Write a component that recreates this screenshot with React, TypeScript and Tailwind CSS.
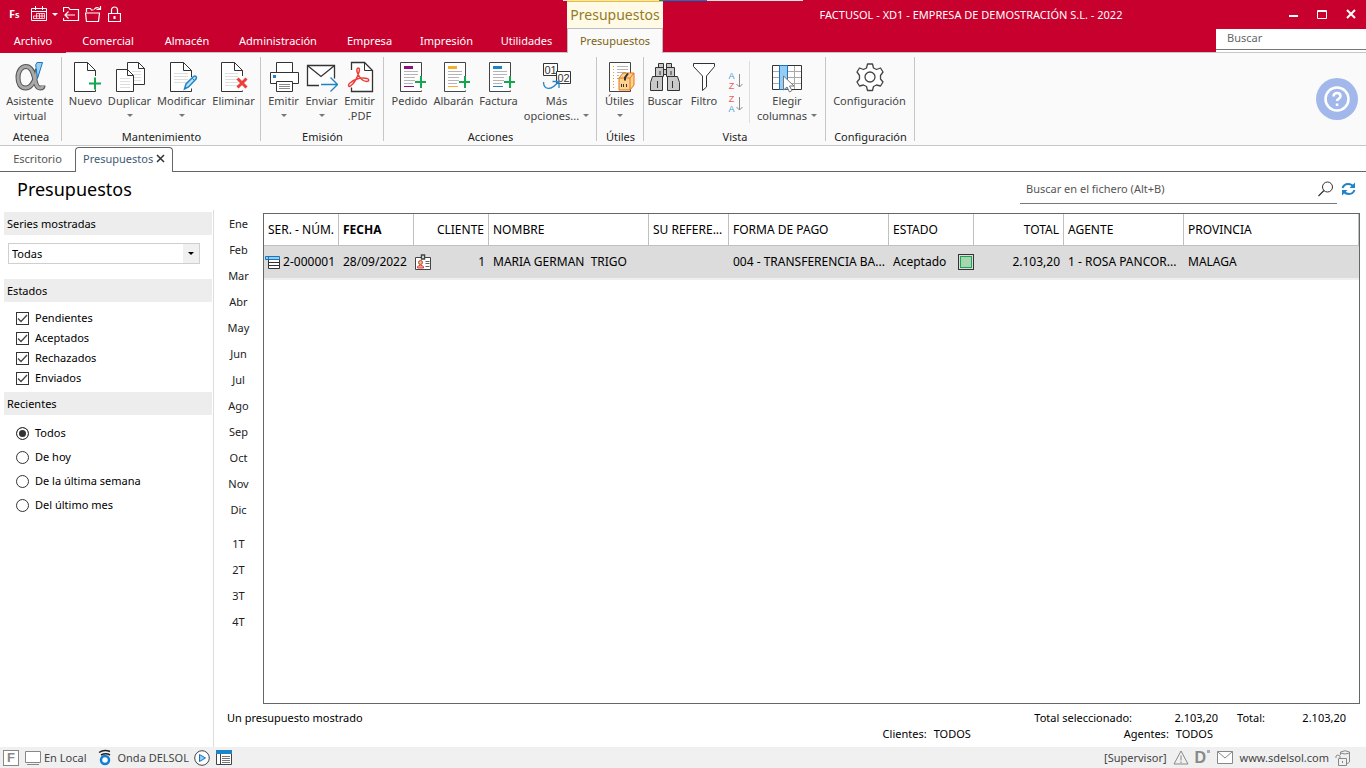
import { useState } from 'react';
import type { ReactNode } from 'react';

const MENUS = [
  { label: 'Comercial', width: 'w-[84px]' },
  { label: 'Almacén', width: 'w-[74px]' },
  { label: 'Administración', width: 'w-[108px]' },
  { label: 'Empresa', width: 'w-[75px]' },
  { label: 'Impresión', width: 'w-[79px]' },
  { label: 'Utilidades', width: 'w-[81px]' },
];

const MONTHS = ['Ene', 'Feb', 'Mar', 'Abr', 'May', 'Jun', 'Jul', 'Ago', 'Sep', 'Oct', 'Nov', 'Dic'];
const QUARTERS = ['1T', '2T', '3T', '4T'];
const ESTADOS = ['Pendientes', 'Aceptados', 'Rechazados', 'Enviados'];
const RECIENTES = ['Todos', 'De hoy', 'De la última semana', 'Del último mes'];

/* ---------- icons ---------- */

function Icon({ children }: { children: ReactNode }) {
  return (
    <svg width="32" height="32" viewBox="0 0 32 32" fill="none" className="shrink-0">
      {children}
    </svg>
  );
}

function PageLines({ x, y, w, rows }: { x: number; y: number; w: number; rows: number }) {
  return (
    <g stroke="#dedede">
      {Array.from({ length: rows }, (_, i) => (
        <path key={i} d={`M${x} ${y + i * 3}h${w}`} />
      ))}
    </g>
  );
}

function AlphaIcon() {
  return (
    <Icon>
      <path
        d="M23.500 8C21 21 17 27 11.500 27C6.500 27 4 22.500 4 16.500C4 10 7.500 5.500 12 5.500C17 5.500 19 10 20.500 17C21.500 22 22.500 27 26 27C28 27 29 26 29 24.500"
        stroke="#555" strokeWidth="5"
      />
      <path
        d="M23.500 9C21 21 17 27 11.500 27C6.500 27 4 22.500 4 16.500C4 10 7.500 5.500 12 5.500C17 5.500 19 10 20.500 17C21.500 22 22.500 27 26 27C27.500 27 28.500 26.500 29 25"
        stroke="#a9a9a9" strokeWidth="3"
      />
      <path d="M28.500 1.500h-5.500q-2 2-1 5l1.500 11z" fill="#9bd0f5" stroke="#1a75bb" />
    </Icon>
  );
}

function NewIcon() {
  return (
    <Icon>
      <path d="M25.500 15v-5.500l-8-8h-13v29h21v-2" fill="#fff" stroke="#333" />
      <path d="M17.500 1.500v8h8" stroke="#333" />
      <path d="M25 16.500v12M19 22.500h12" stroke="#17a551" strokeWidth="2" />
    </Icon>
  );
}

function DuplicateIcon() {
  return (
    <Icon>
      <path d="M13.500 1.500h11l6 6v16h-17z" fill="#fff" stroke="#333" />
      <path d="M24.500 1.500v6h6" stroke="#333" />
      <PageLines x={18} y={10.5} w={9} rows={4} />
      <path d="M2.500 8.500h11l6 6v16h-17z" fill="#fff" stroke="#333" />
      <path d="M13.500 8.500v6h6" stroke="#333" />
      <PageLines x={6} y={17.5} w={10} rows={4} />
    </Icon>
  );
}

function EditIcon() {
  return (
    <Icon>
      <path d="M25.500 16v-6.500l-8-8h-13v29h21v-3" fill="#fff" stroke="#333" />
      <path d="M17.500 1.500v8h8" stroke="#333" />
      <PageLines x={8} y={12.5} w={14} rows={4} />
      <path d="M18.500 28l1.500-5 7.500-7.500q1.500-1 2.500 0t0 2.500l-7.500 8z" fill="#bfe0f7" stroke="#1f83c8" strokeWidth="1.500" />
      <path d="M26 17l3 3" stroke="#1f83c8" />
    </Icon>
  );
}

function DeleteIcon() {
  return (
    <Icon>
      <path d="M24.500 15v-5.500l-8-8h-13v29h21v-1" fill="#fff" stroke="#333" />
      <path d="M16.500 1.500v8h8" stroke="#333" />
      <PageLines x={7} y={12.5} w={13} rows={5} />
      <path d="M19.500 17.500l9 9M28.500 17.500l-9 9" stroke="#ee3e3a" strokeWidth="3" />
    </Icon>
  );
}

function PrinterIcon() {
  return (
    <Icon>
      <path d="M8.500 11.500v-10h16v10" fill="#fff" stroke="#333" />
      <path d="M2.500 11.500h28v11h-28z" fill="#fff" stroke="#333" />
      <path d="M8.500 20.500h16v10h-16z" fill="#fff" stroke="#333" />
      <path d="M11 23.500h11M11 25.500h11M11 27.500h11" stroke="#8a8a8a" />
      <path d="M5 14h3v3h-3z" fill="#1f83c8" />
    </Icon>
  );
}

function SendIcon() {
  return (
    <Icon>
      <path d="M13 24.500h-11.500v-20h27v13" fill="#fff" stroke="#333" strokeWidth="1.300" />
      <path d="M2 5l13 10.500L28 5" stroke="#333" strokeWidth="1.300" />
      <path d="M15 23.500h16M24.500 16.500l7 7-7 7" stroke="#1f83c8" strokeWidth="1.300" />
    </Icon>
  );
}

function PdfIcon() {
  return (
    <Icon>
      <path d="M7.500 9v-7.500h13l8 8v21h-21v-4" fill="#fff" stroke="#333" strokeWidth="1.300" />
      <path d="M20.500 1.500v8h8" stroke="#333" />
      <path
        d="M14.500 7c-2 0-2 2.500-1 5 1.500 4 5 8.500 9 8.500 3 0 3-2.500.5-3-5-1-12 .5-17 4.500-2.500 2-1.500 4.500.5 3 3.500-2.500 7-9 8.500-14 .7-2.300.5-4-.5-4z"
        stroke="#ee3e3a" strokeWidth="1.500"
      />
    </Icon>
  );
}

function DocAddIcon({ color }: { color: string }) {
  return (
    <Icon>
      <path d="M27.500 15v-13.500h-21v29h21v-1" fill="#fff" stroke="#444" />
      <path d="M10 5h9v3h-9z" fill={color} />
      <path d="M10 10.500h14M10 13.500h14M10 16.500h11M10 19.500h11M10 22.500h9" stroke="#b5b5b5" />
      <path d="M10 25.500h10" stroke={color} />
      <path d="M27 15v12M21 21h11" stroke="#17a551" strokeWidth="2" />
    </Icon>
  );
}

function MoreIcon() {
  return (
    <Icon>
      <path d="M2.500 2.500h14v12h-14z" fill="#fff" stroke="#333" />
      <text x="9.500" y="12.500" textAnchor="middle" fontSize="11" fill="#333" fontFamily="Liberation Sans, sans-serif">01</text>
      <path d="M15.500 10.500h14v12h-14z" fill="#fff" stroke="#333" />
      <text x="22.500" y="20.500" textAnchor="middle" fontSize="11" fill="#333" fontFamily="Liberation Sans, sans-serif">02</text>
      <path d="M2.500 21c0 7 7 10 15-.5M11.500 20.500h6.500v6.500" stroke="#2b88cc" strokeWidth="1.300" />
    </Icon>
  );
}

function ToolsIcon() {
  return (
    <Icon>
      <path d="M5.500 1.500h21v29h-21z" fill="#fff" stroke="#444" />
      <path d="M13 5.500h11M13 8.500h11M13 11.500h9M13 14.500h2M13 17.500h2" stroke="#b5b5b5" />
      <path d="M9.500 5v23" stroke="#f0a020" strokeDasharray="1 2" />
      <path d="M15 17l4-5h11v12l-4 5H15z" fill="#fbd28e" stroke="#e8741c" />
      <path d="M15 17h11v12M26 17l4-5" stroke="#e8741c" />
      <path d="M24 12.500l-3 4v3" stroke="#333" strokeWidth="2" />
      <path d="M17.500 23v3M19.500 23v3M22.500 23v3" stroke="#333" />
    </Icon>
  );
}

function BinocularsIcon() {
  return (
    <Icon>
      <g fill="#c9c9c9" stroke="#333">
        <path d="M9.500 2.500h5v5h-5zM17.500 2.500h5v5h-5z" />
        <path d="M6.500 6.500h8v9h-8zM17.500 6.500h8v9h-8zM14.500 8.500h3v5h-3z" />
        <path d="M3.500 15.500h10v14h-12v-8zM18.500 15.500h10l2 6v8h-12z" />
      </g>
      <path d="M8.500 20v7M23.500 20v7M11 10v4M22 10v4" stroke="#333" />
    </Icon>
  );
}

function FunnelIcon() {
  return (
    <Icon>
      <path d="M5.500 2.500h21v3l-8 9.500v11l-4 3.500v-14.500l-9-9.500z" fill="#fff" stroke="#333" />
    </Icon>
  );
}

function SortIcon({ top, bottom, topClass, bottomClass }: { top: string; bottom: string; topClass: string; bottomClass: string }) {
  return (
    <span className="flex items-center gap-px">
      <span className="flex flex-col font-['Liberation_Sans',sans-serif] text-[9px] leading-[10px]">
        <span className={topClass}>{top}</span>
        <span className={bottomClass}>{bottom}</span>
      </span>
      <svg width="7" height="16" viewBox="0 0 7 16" fill="none" stroke="#888">
        <path d="M3.500 1v13M.5 11l3 3 3-3" />
      </svg>
    </span>
  );
}

function ColumnsIcon() {
  return (
    <Icon>
      <path d="M1.500 4.500h29v24h-29z" fill="#fff" />
      <path d="M2 10.500h28M2 16.500h28M2 22.500h28M23.500 5v23" stroke="#aaa" />
      <path d="M1.500 4.500h29v24h-29z" stroke="#333" />
      <path d="M8.500 4.500h8v24h-8z" fill="#93ccf4" stroke="#1a75bb" />
      <path d="M12.500 15v14l3.500-3 2.500 5 2.500-1.500-2.500-4.500h4.500z" fill="#fff" stroke="#777" />
    </Icon>
  );
}

function GearIcon() {
  return (
    <Icon>
      <path
        d="M13.500 3h5l1 4 3 1.500 4-1.500 2.500 4-2.500 3.500v3.500l2.500 3-2.500 4-4-1-3 1.500-1 4h-5l-1-4-3-1.500-4 1-2.500-4 2.500-3v-3.500l-2.500-3.500 2.500-4 4 1.500 3-1.500z"
        fill="#fff" stroke="#444" strokeWidth="1.300" strokeLinejoin="round"
      />
      <circle cx="16" cy="16" r="5" stroke="#444" strokeWidth="1.300" />
    </Icon>
  );
}

/* ---------- ribbon ---------- */

function Caret() {
  return <span className="inline-block border-x-[3px] border-t-[3px] border-x-transparent border-t-[#777]" />;
}

function RibbonButton({ icon, label, second, caret, width }: { icon: ReactNode; label: string; second?: string; caret?: boolean; width: string }) {
  return (
    <button className={`${width} flex flex-col items-center whitespace-nowrap text-[11px] leading-[15px] text-[#444]`}>
      {icon}
      <span>{label}</span>
      <span className="flex h-[15px] items-center gap-1">
        {second}
        {caret && <Caret />}
      </span>
    </button>
  );
}

function RibbonGroup({ title, width, children }: { title: string; width: string; children: ReactNode }) {
  return (
    <section className={`${width} relative flex shrink-0 flex-col justify-between pt-2 after:absolute after:top-1 after:right-0 after:h-[84px] after:w-px after:bg-[#c6c6c6]`}>
      <div className="flex justify-center pr-[2px]">{children}</div>
      <h2 className="text-center text-[11px] leading-4 text-[#222]">{title}</h2>
    </section>
  );
}

function Ribbon() {
  return (
    <div className="flex h-[94px] shrink-0 items-stretch border-y border-[#c6c6c6] bg-[#fafafa]">
      <RibbonGroup title="Atenea" width="w-[62px]">
        <RibbonButton icon={<AlphaIcon />} label="Asistente" second="virtual" width="w-[60px]" />
      </RibbonGroup>
      <RibbonGroup title="Mantenimiento" width="w-[199px]">
        <RibbonButton icon={<NewIcon />} label="Nuevo" width="w-[42px]" />
        <RibbonButton icon={<DuplicateIcon />} label="Duplicar" caret width="w-[46px]" />
        <RibbonButton icon={<EditIcon />} label="Modificar" caret width="w-[58px]" />
        <RibbonButton icon={<DeleteIcon />} label="Eliminar" width="w-[46px]" />
      </RibbonGroup>
      <RibbonGroup title="Emisión" width="w-[123px]">
        <RibbonButton icon={<PrinterIcon />} label="Emitir" caret width="w-[38px]" />
        <RibbonButton icon={<SendIcon />} label="Enviar" caret width="w-[38px]" />
        <RibbonButton icon={<PdfIcon />} label="Emitir" second=".PDF" width="w-[38px]" />
      </RibbonGroup>
      <RibbonGroup title="Acciones" width="w-[213px]">
        <RibbonButton icon={<DocAddIcon color="#8e0f7d" />} label="Pedido" width="w-[44px]" />
        <RibbonButton icon={<DocAddIcon color="#f9ae2b" />} label="Albarán" width="w-[44px]" />
        <RibbonButton icon={<DocAddIcon color="#1f83c8" />} label="Factura" width="w-[46px]" />
        <RibbonButton icon={<MoreIcon />} label="Más" second="opciones..." caret width="w-[70px]" />
      </RibbonGroup>
      <RibbonGroup title="Útiles" width="w-[47px]">
        <RibbonButton icon={<ToolsIcon />} label="Útiles" caret width="w-[44px]" />
      </RibbonGroup>
      <RibbonGroup title="Vista" width="w-[182px]">
        <RibbonButton icon={<BinocularsIcon />} label="Buscar" width="w-[42px]" />
        <RibbonButton icon={<FunnelIcon />} label="Filtro" width="w-[36px]" />
        <div className="flex w-[28px] flex-col items-center gap-[3px] border-r border-[#dedede] pt-[10px]">
          <button aria-label="Orden ascendente">
            <SortIcon top="A" bottom="Z" topClass="text-[#3f9bd8]" bottomClass="text-[#ee5a5a]" />
          </button>
          <button aria-label="Orden descendente">
            <SortIcon top="Z" bottom="A" topClass="text-[#ee5a5a]" bottomClass="text-[#3f9bd8]" />
          </button>
        </div>
        <RibbonButton icon={<ColumnsIcon />} label="Elegir" second="columnas" caret width="w-[74px]" />
      </RibbonGroup>
      <RibbonGroup title="Configuración" width="w-[89px]">
        <RibbonButton icon={<GearIcon />} label="Configuración" width="w-[84px]" />
      </RibbonGroup>
      <button aria-label="Ayuda" className="mr-2 ml-auto self-center rounded-full">
        <svg width="42" height="42" viewBox="0 0 42 42" fill="none">
          <circle cx="21" cy="21" r="21" fill="#a3b8ea" />
          <circle cx="21" cy="21" r="11.500" stroke="#fff" strokeWidth="2.500" />
          <path d="M17.500 18.500c0-2 1.500-3.500 3.500-3.500s3.500 1.300 3.500 3.200c0 2.300-3.500 2.800-3.500 4.800" stroke="#fff" strokeWidth="2.500" />
          <path d="M19.800 25.500h2.500v2.500h-2.500z" fill="#fff" />
        </svg>
      </button>
    </div>
  );
}

/* ---------- title bar ---------- */

function QuickAccess() {
  return (
    <div className="flex h-7 items-center pl-[9px] text-white">
      <span className="w-[22px] text-[11px] font-bold">F<span className="text-[9px]">s</span></span>
      <button aria-label="Calendario" className="flex items-center gap-1">
        <svg width="17" height="16" viewBox="0 0 17 16" fill="none" stroke="#fff">
          <path d="M.5 2.500h15v12h-15zM.5 5.500h15M4.500 0v4M11.500 0v4" />
          <path d="M5.500 7.500h8v5h-11v-2.500h11M5.500 7.500v5M8.500 7.500v5M11 7.500v5" strokeWidth=".8" />
        </svg>
        <span className="border-x-[3px] border-t-[3px] border-x-transparent border-t-white" />
      </button>
      <button aria-label="Abrir" className="ml-[5px]">
        <svg width="17" height="16" viewBox="0 0 17 16" fill="none" stroke="#fff">
          <path d="M.5 6v-4.500h5l1.500 2h8.500v11h-15v-2.500M2 9h10M5.500 5.500l-3.500 3.500 3.500 3.500" strokeWidth="1.200" />
        </svg>
      </button>
      <button aria-label="Cambiar empresa" className="ml-[5px]">
        <svg width="17" height="16" viewBox="0 0 17 16" fill="none" stroke="#fff">
          <path d="M1.500 6v-3.500h4l1 1.500h2M1.500 15.500l-1-8.500h14l-1 8.500zM9 3.500c2-2.500 4-2.500 6-.5M15.500 0v3.500h-4" strokeWidth="1.200" />
        </svg>
      </button>
      <button aria-label="Bloquear" className="ml-[6px]">
        <svg width="13" height="17" viewBox="0 0 13 17" fill="none" stroke="#fff">
          <path d="M.5 7.500h12v8h-12zM3.500 7.500v-3.500c0-4 6-4 6 0v3.500" strokeWidth="1.200" />
          <path d="M6.500 10v3" strokeWidth="2" />
        </svg>
      </button>
    </div>
  );
}

function TitleBar() {
  return (
    <header className="flex h-[52px] shrink-0 bg-[#c8002d] text-[11px] text-white">
      <div>
        <QuickAccess />
        <nav className="flex h-6">
          <button className="relative z-10 h-[25px] w-[66px] bg-[#c8002d] pt-px">Archivo</button>
          {MENUS.map(m => (
            <button key={m.label} className={`${m.width} h-6 pt-[2px] whitespace-nowrap`}>{m.label}</button>
          ))}
        </nav>
      </div>

      <div className="relative z-10 flex h-[53px] w-24 flex-col text-center text-[#7d6211]">
        <div className="h-7 border-t-2 border-[#ffc000] bg-[#fffae6] text-[14px] leading-[26px] text-[#937a28]">Presupuestos</div>
        <button className="flex-1 border border-b-0 border-[#bdbdbd] bg-[#fafafa]">Presupuestos</button>
        {/* window behind, peeking over the top edge */}
        <div className="absolute top-0 -left-1 flex h-px">
          <span className="w-24 bg-[#e5e5e5]" />
          <span className="w-12 bg-[#0078d7]" />
          <span className="w-24 bg-[#e5e5e5]" />
        </div>
      </div>

      <div className="flex flex-1 flex-col">
        <div className="flex h-[29px]">
          <h1 className="flex-1 text-center leading-[29px] whitespace-nowrap">FACTUSOL - XD1 - EMPRESA DE DEMOSTRACIÓN S.L. - 2022</h1>
          <div className="flex">
            <button aria-label="Minimizar" className="grid w-[29px] place-items-center">
              <svg width="11" height="11" fill="none" stroke="#fff" strokeWidth="2"><path d="M1 7h9" /></svg>
            </button>
            <button aria-label="Maximizar" className="grid w-[29px] place-items-center">
              <svg width="11" height="11" fill="none" stroke="#fff"><path d="M.5 1.500h9v8h-9zM0 2.500h10" /></svg>
            </button>
            <button aria-label="Cerrar" className="grid w-[29px] place-items-center">
              <svg width="11" height="11" fill="none" stroke="#fff" strokeWidth="2"><path d="M1 1l8 8M9 1l-8 8" /></svg>
            </button>
          </div>
        </div>
        <div className="ml-auto h-[23px] w-[150px] bg-white">
          <input aria-label="Buscar" placeholder="Buscar" className="block h-[21px] w-full border-b border-[#777] px-[11px] pb-[3px] text-[11px] text-black outline-none placeholder:text-[#666]" />
        </div>
      </div>
    </header>
  );
}

/* ---------- sidebar ---------- */

function SectionTitle({ children }: { children: ReactNode }) {
  return <h3 className="h-[23px] bg-[#ededed] pl-[3px] leading-6">{children}</h3>;
}

function Sidebar() {
  const [estados, setEstados] = useState<string[]>(ESTADOS);
  const [reciente, setReciente] = useState('Todos');

  const toggle = (name: string) => {
    setEstados(prev => (prev.includes(name) ? prev.filter(e => e !== name) : [...prev, name]));
  };

  return (
    <aside className="w-[214px] shrink-0 border-r border-[#dcdcdc] pt-[2px] pr-px pl-1">
      <SectionTitle>Series mostradas</SectionTitle>
      <div className="relative mt-2 mr-3 mb-[15px] ml-1 h-[21px]">
        <select aria-label="Series mostradas" className="h-full w-full appearance-none border border-[#cfcfcf] bg-white pl-[3px] outline-none">
          <option>Todas</option>
        </select>
        <span className="pointer-events-none absolute inset-y-px right-px grid w-4 place-items-center bg-[#f0f0f0]">
          <span className="border-x-[3px] border-t-[3px] border-x-transparent border-t-black" />
        </span>
      </div>

      <SectionTitle>Estados</SectionTitle>
      <div className="mt-[6px] mb-1 pl-3">
        {ESTADOS.map(e => (
          <label key={e} className="flex h-5 items-center gap-[6px]">
            <span className="grid size-[13px] place-items-center">
              <input
                type="checkbox"
                checked={estados.includes(e)}
                onChange={() => toggle(e)}
                className="peer col-start-1 row-start-1 size-[13px] appearance-none border border-[#333] bg-white"
              />
              <svg width="11" height="11" fill="none" stroke="#444" strokeWidth="1.300" className="pointer-events-none invisible col-start-1 row-start-1 peer-checked:visible">
                <path d="M1 5.500l3 3 6-6.500" />
              </svg>
            </span>
            {e}
          </label>
        ))}
      </div>

      <SectionTitle>Recientes</SectionTitle>
      <div className="mt-[6px] pl-3">
        {RECIENTES.map(r => (
          <label key={r} className="flex h-6 items-center gap-[6px]">
            <input
              type="radio"
              name="recientes"
              checked={reciente === r}
              onChange={() => setReciente(r)}
              className="size-[13px] appearance-none rounded-full border border-[#333] bg-white checked:bg-[#333] checked:shadow-[inset_0_0_0_2px_white]"
            />
            {r}
          </label>
        ))}
      </div>
    </aside>
  );
}

function MonthColumn() {
  return (
    <nav className="flex w-[49px] shrink-0 flex-col text-[#222]">
      {MONTHS.map(m => (
        <button key={m} className="h-[26px]">{m}</button>
      ))}
      <div className="mt-2 flex flex-col">
        {QUARTERS.map(q => (
          <button key={q} className="h-[26px]">{q}</button>
        ))}
      </div>
    </nav>
  );
}

/* ---------- table ---------- */

const HEAD = 'h-8 border-r border-b border-[#c0c0c0] px-1 font-normal';
const CELL = 'h-8 px-1';

function BudgetTable() {
  return (
    <table className="w-full table-fixed border-separate border-spacing-0 text-left text-[12px] whitespace-nowrap">
      <colgroup>
        <col className="w-[75px]" />
        <col className="w-[75px]" />
        <col className="w-[75px]" />
        <col className="w-[160px]" />
        <col className="w-[80px]" />
        <col className="w-[160px]" />
        <col className="w-[85px]" />
        <col className="w-[90px]" />
        <col className="w-[120px]" />
        <col />
      </colgroup>
      <thead>
        <tr>
          <th className={HEAD}>SER. - NÚM.</th>
          <th className="h-8 border-r border-b border-[#c0c0c0] px-1 font-bold">FECHA</th>
          <th className={`${HEAD} text-right`}>CLIENTE</th>
          <th className={HEAD}>NOMBRE</th>
          <th className={HEAD}>SU REFERE...</th>
          <th className={HEAD}>FORMA DE PAGO</th>
          <th className={HEAD}>ESTADO</th>
          <th className={`${HEAD} text-right`}>TOTAL</th>
          <th className={HEAD}>AGENTE</th>
          <th className={HEAD}>PROVINCIA</th>
        </tr>
      </thead>
      <tbody>
        <tr className="bg-[#dcdcdc] shadow-[0_2px_0_#efefef]">
          <td className="h-8 pr-1 pl-px">
            <span className="flex items-center justify-between">
              <svg width="16" height="14" viewBox="0 0 16 14" fill="none">
                <path d="M3.500 4.500h11v9h-11z" fill="#fff" stroke="#333" />
                <path d="M4 7.500h10M4 10.500h10" stroke="#333" />
                <path d="M.5 1.500h14v3h-14z" fill="#93ccf4" stroke="#1a75bb" />
                <path d="M3.500 1.500v3" stroke="#1a75bb" />
              </svg>
              2-000001
            </span>
          </td>
          <td className={CELL}>28/09/2022</td>
          <td className="h-8 pr-1 pl-px">
            <span className="flex items-center justify-between">
              <svg width="17" height="17" viewBox="0 0 17 17" fill="none">
                <path d="M.5 3.500h15v12h-15z" fill="#fff" stroke="#444" />
                <path d="M6.500 1h3v4h-3z" fill="#fff" stroke="#444" strokeWidth="1.500" />
                <circle cx="5.500" cy="8.500" r="2" fill="#e9b48c" stroke="#b5502b" />
                <path d="M2.500 14v-1.500q3-3 6 0v1.500z" fill="#f7a3a0" stroke="#ee3e3a" />
                <path d="M10.500 7.500h4M10.500 9.500h4M10.500 12.500h4" stroke="#666" />
              </svg>
              1
            </span>
          </td>
          <td className={`${CELL} whitespace-pre`}>{'MARIA GERMAN  TRIGO'}</td>
          <td className={CELL} />
          <td className={CELL}>004 - TRANSFERENCIA BA...</td>
          <td className="h-8 pl-1">
            <span className="flex items-center justify-between">
              Aceptado
              <span className="size-4 border border-[#333] bg-[#a8d5b0] shadow-[inset_0_0_0_1px_#dcdcdc,inset_0_0_0_2px_#17a551]" />
            </span>
          </td>
          <td className={`${CELL} text-right`}>2.103,20</td>
          <td className={CELL}>1 - ROSA PANCOR...</td>
          <td className={CELL}>MALAGA</td>
        </tr>
      </tbody>
    </table>
  );
}

/* ---------- status bar ---------- */

function StatusBar() {
  return (
    <footer className="flex h-[21px] shrink-0 items-center bg-[#f0f0f0] pr-[15px] pl-[3px] text-[#444]">
      <span className="grid size-4 place-items-center border border-[#888] bg-white font-['Liberation_Sans',sans-serif] text-[13px] leading-[14px] font-bold text-[#888]">F</span>
      <svg width="17" height="16" fill="none" stroke="#888" className="mr-[2px] ml-[6px]">
        <path d="M.5 1.500h15v11h-15z" fill="#fff" />
        <path d="M2 14.500h12" />
      </svg>
      <button>En Local</button>
      <svg width="15" height="17" fill="none" className="mr-1 ml-3">
        <circle cx="7" cy="11" r="4" fill="#fff" stroke="#0f7fd6" strokeWidth="2.500" />
        <path d="M1 3.500q5-3.500 11-1M3 6q5-2.500 9 0" stroke="#222" strokeWidth="1.500" />
      </svg>
      <button>Onda DELSOL</button>
      <button aria-label="Reproducir" className="ml-[5px]">
        <svg width="16" height="16" fill="none">
          <circle cx="8" cy="8" r="7.300" fill="#fff" stroke="#444" />
          <path d="M5.500 4.500l6 3.500-6 3.500z" fill="#93ccf4" stroke="#1a75bb" />
        </svg>
      </button>
      <button aria-label="Panel" className="ml-[6px]">
        <svg width="16" height="15" fill="none">
          <path d="M.5 2.500h15v12h-15z" fill="#fff" stroke="#444" />
          <path d="M0 0h16v4H0z" fill="#1f83c8" />
          <path d="M4.500 4v10" stroke="#444" />
          <path d="M6 6.500h8M6 8.500h8M6 10.500h8M6 12.500h8" stroke="#777" />
        </svg>
      </button>

      <span className="ml-auto">[Supervisor]</span>
      <svg width="16" height="15" fill="none" stroke="#888" className="ml-[6px]">
        <path d="M8 1l7 13H1zM8 5.500v5M8 11.500v1.500" />
      </svg>
      <span className="ml-[6px] flex w-[17px] gap-px">
        <span className="font-['Liberation_Sans',sans-serif] text-[16px] leading-4 font-bold text-[#888]">D</span>
        <span className="size-[3px] bg-[#aaa]" />
      </span>
      <svg width="17" height="13" fill="none" stroke="#888" className="mr-[6px] ml-[5px]">
        <path d="M.5.5h15v12h-15z" fill="#fff" />
        <path d="M.5.5l7.500 6.500 7.500-6.500" />
      </svg>
      <a href="#sdelsol">www.sdelsol.com</a>
      <svg width="16" height="16" fill="none" stroke="#888" className="ml-[6px]">
        <path d="M5.500 5v-3q4.500-2.500 9 0v10q-1 1.500-3 1.500M5.500 3q4.500 2 9 0" />
        <path d="M3.500 8.500h8v7h-8zM1 8v-2q1.500-2 4 0v2.500M7.500 11v2" />
      </svg>
    </footer>
  );
}

export default function App() {
  return (
    <div className="flex min-h-screen flex-col bg-white font-['Noto_Sans','Open_Sans',sans-serif] text-[11px] leading-4 text-black">
      <TitleBar />
      <Ribbon />

      <div className="flex h-[26px] shrink-0 items-end border-b border-[#666]">
        <button className="h-6 w-[75px] pb-px text-[#555]">Escritorio</button>
        <div className="-mb-px flex h-[25px] w-[98px] items-center gap-[3px] rounded-t-[4px] border border-b-0 border-[#666] bg-white pb-[3px] pl-[7px] text-[#3d5a75]">
          Presupuestos
          <button aria-label="Cerrar pestaña">
            <svg width="9" height="9" fill="none" stroke="#333" strokeWidth="1.500"><path d="M1 1l7 7M8 1l-7 7" /></svg>
          </button>
        </div>
      </div>

      <div className="flex h-[38px] shrink-0 justify-between pr-[10px] pl-[17px]">
        <h1 className="text-[18px] leading-[34px]">Presupuestos</h1>
        <div className="flex h-8 items-center">
          <div className="flex h-full w-[317px] items-center border-b border-[#777] pt-[2px] pr-[3px] pl-[6px]">
            <input aria-label="Buscar en el fichero" placeholder="Buscar en el fichero (Alt+B)" className="min-w-0 flex-1 outline-none placeholder:text-[#555]" />
            <svg width="16" height="16" fill="none" stroke="#333">
              <circle cx="9.500" cy="6" r="5" />
              <path d="M6 9.500l-5.500 5.500" strokeWidth="1.300" />
            </svg>
          </div>
          <button aria-label="Actualizar" className="ml-1 pt-[2px]">
            <svg width="15" height="14" fill="none" stroke="#1f83c8" strokeWidth="2">
              <path d="M1.500 6q1.500-4 5.500-4t5.500 3M13.500 8q-1.500 4-5.500 4t-5.500-3" />
              <path d="M14 .5v5.500h-5.500zM1 13.500v-5.500h5.500z" fill="#1f83c8" stroke="none" />
            </svg>
          </button>
        </div>
      </div>

      <div className="flex flex-1">
        <Sidebar />
        <div className="flex flex-1 flex-col pt-px">
          <div className="flex flex-1">
            <MonthColumn />
            <div className="mt-[2px] mr-[6px] flex-1 border border-[#666]">
              <BudgetTable />
            </div>
          </div>
          <div className="flex h-[43px] justify-between pt-[6px] pr-5 pl-[13px]">
            <span>Un presupuesto mostrado</span>
            <div>
              <div className="flex justify-end">
                <span>Total seleccionado:</span>
                <span className="w-[86px] text-right">2.103,20</span>
                <span className="ml-[19px]">Total:</span>
                <span className="w-[81px] text-right">2.103,20</span>
              </div>
              <div className="flex pr-[133px]">
                <span>Clientes:</span>
                <span className="ml-[7px] w-[190px]">TODOS</span>
                <span>Agentes:</span>
                <span className="ml-[7px]">TODOS</span>
              </div>
            </div>
          </div>
        </div>
      </div>

      <StatusBar />
    </div>
  );
}
